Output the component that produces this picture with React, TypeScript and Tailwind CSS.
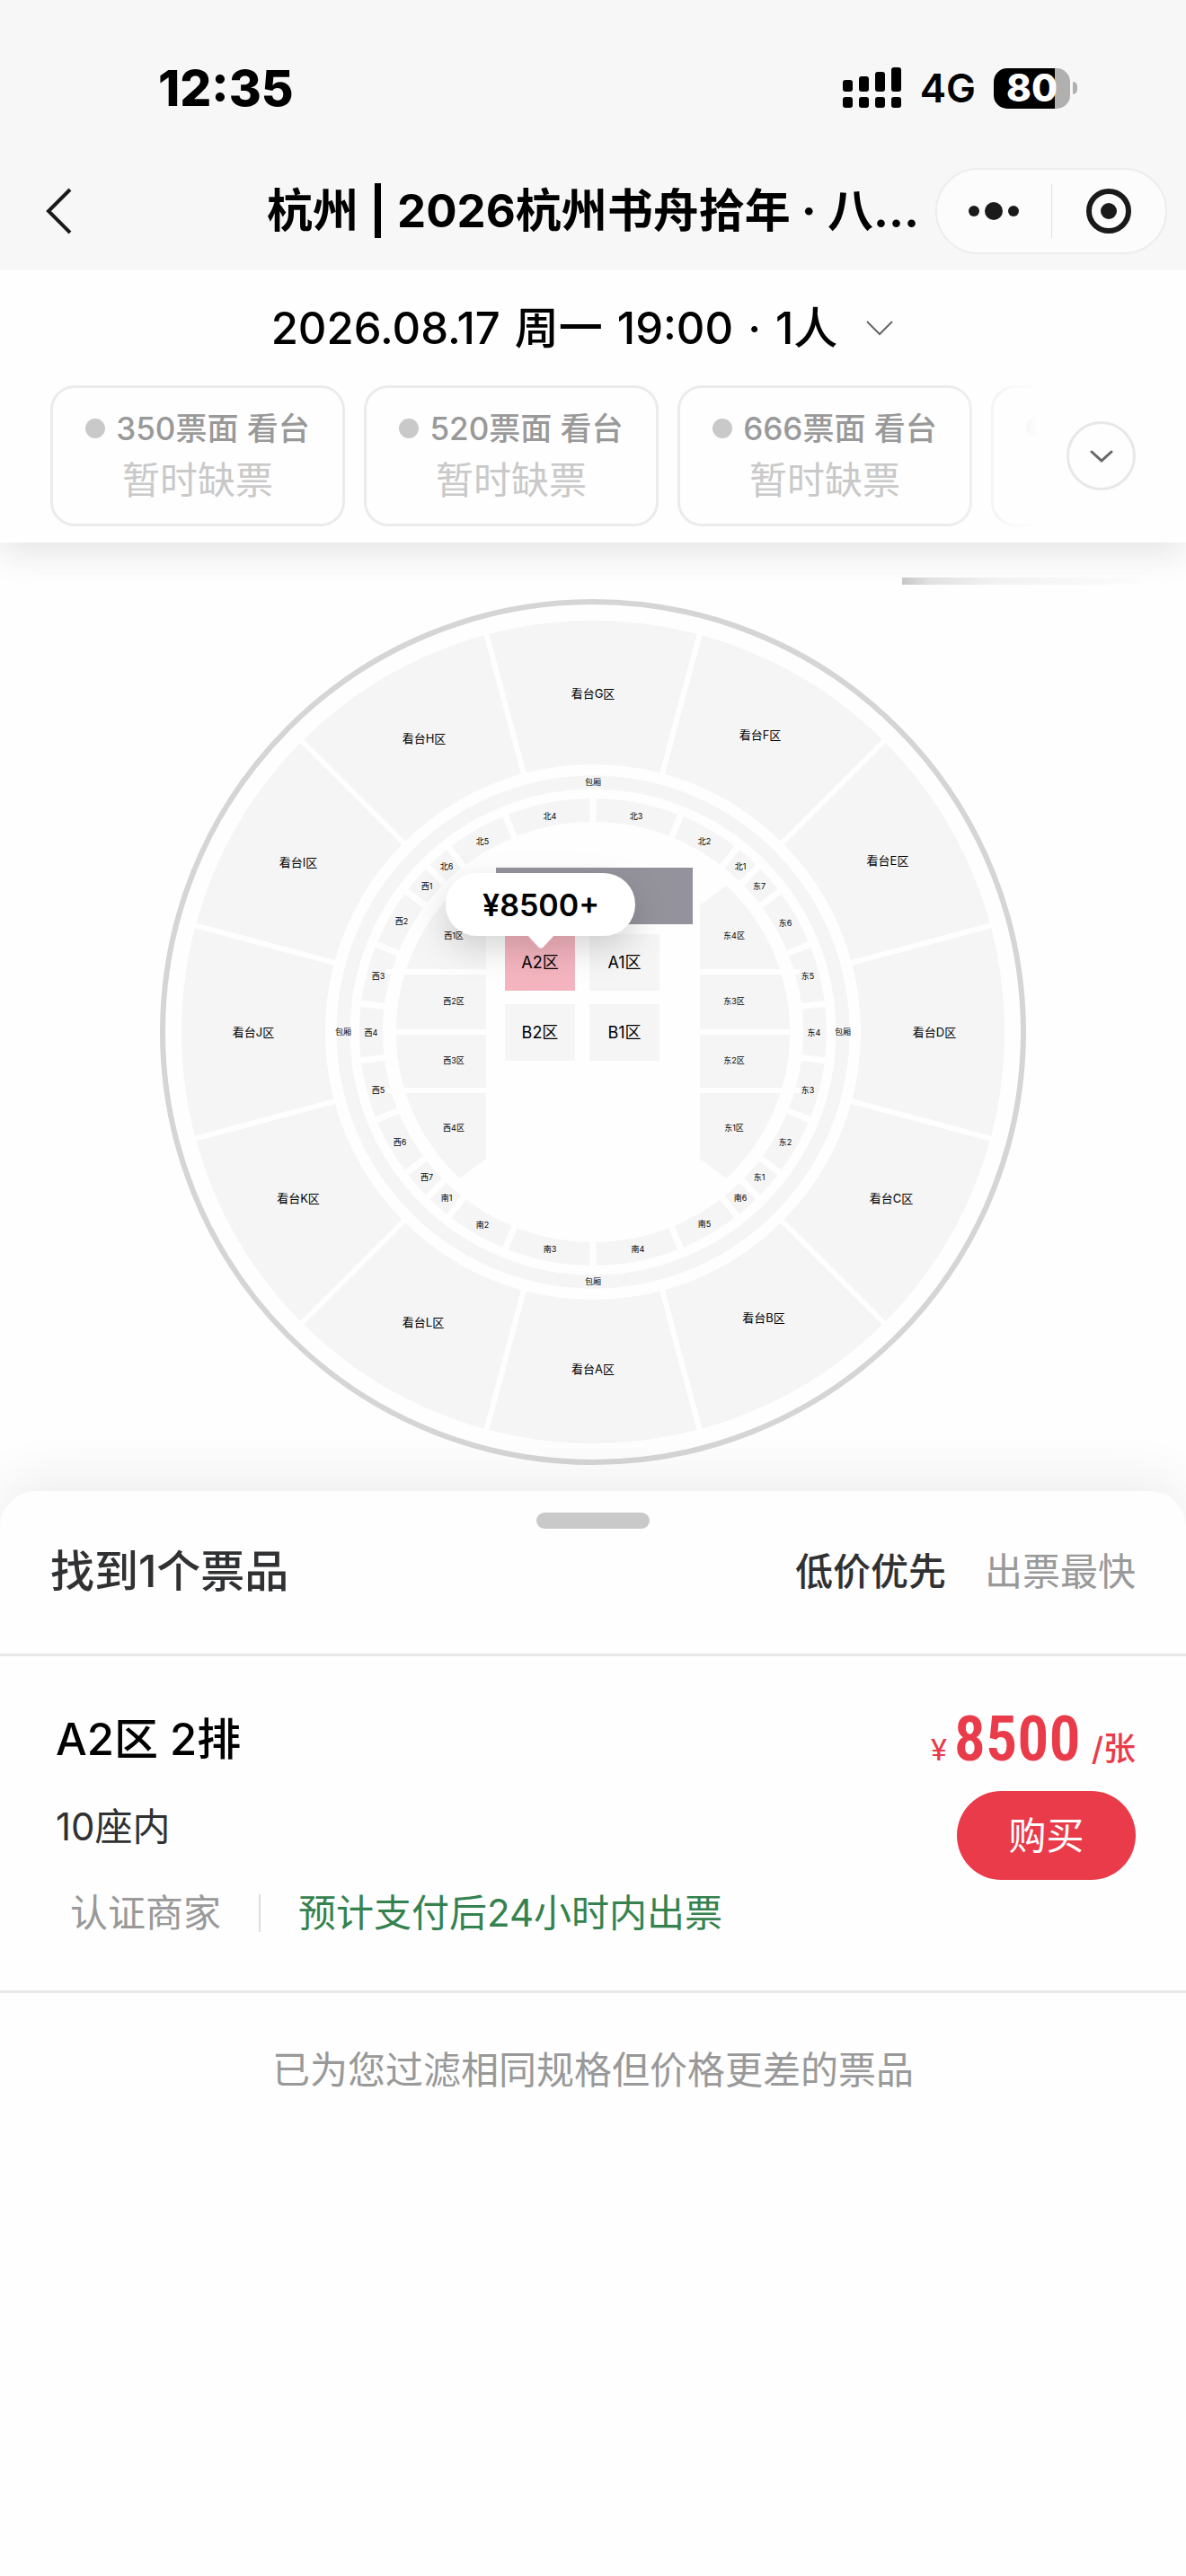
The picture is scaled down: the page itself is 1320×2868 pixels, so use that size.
import { useState } from "react";

type MapLabel = { text: string; x: number; y: number };

const CX = 660;
const CY = 545;

const tiers = [
  { id: "350", name: "350票面 看台" },
  { id: "520", name: "520票面 看台" },
  { id: "666", name: "666票面 看台" },
];

const tickets = [
  {
    id: 1,
    name: "A2区 2排",
    seats: "10座内",
    seller: "认证商家",
    delivery: "预计支付后24小时内出票",
    price: 8500,
  },
];

const sectors: MapLabel[] = [
  { text: "看台G区", x: 660, y: 168 },
  { text: "看台F区", x: 846, y: 214 },
  { text: "看台E区", x: 988, y: 354 },
  { text: "看台D区", x: 1040, y: 545 },
  { text: "看台C区", x: 992, y: 730 },
  { text: "看台B区", x: 850, y: 863 },
  { text: "看台A区", x: 660, y: 920 },
  { text: "看台L区", x: 471, y: 868 },
  { text: "看台K区", x: 332, y: 730 },
  { text: "看台J区", x: 282, y: 545 },
  { text: "看台I区", x: 332, y: 356 },
  { text: "看台H区", x: 472, y: 218 },
];

const blocks: MapLabel[] = [
  { text: "包厢", x: 660, y: 267 },
  { text: "包厢", x: 382, y: 545 },
  { text: "包厢", x: 938, y: 545 },
  { text: "包厢", x: 660, y: 823 },
  { text: "北4", x: 612, y: 305 },
  { text: "北3", x: 708, y: 305 },
  { text: "北5", x: 537, y: 333 },
  { text: "北2", x: 784, y: 333 },
  { text: "北6", x: 497, y: 361 },
  { text: "北1", x: 824, y: 361 },
  { text: "西1", x: 475, y: 383 },
  { text: "东7", x: 845, y: 383 },
  { text: "西2", x: 447, y: 422 },
  { text: "东6", x: 874, y: 424 },
  { text: "西3", x: 421, y: 483 },
  { text: "东5", x: 899, y: 483 },
  { text: "西4", x: 413, y: 546 },
  { text: "东4", x: 906, y: 546 },
  { text: "西5", x: 421, y: 610 },
  { text: "东3", x: 899, y: 610 },
  { text: "西6", x: 445, y: 668 },
  { text: "东2", x: 874, y: 668 },
  { text: "西7", x: 475, y: 707 },
  { text: "东1", x: 845, y: 707 },
  { text: "南1", x: 497, y: 730 },
  { text: "南6", x: 824, y: 730 },
  { text: "南2", x: 537, y: 760 },
  { text: "南5", x: 784, y: 759 },
  { text: "南3", x: 612, y: 787 },
  { text: "南4", x: 710, y: 787 },
  { text: "西1区", x: 505, y: 438 },
  { text: "西2区", x: 505, y: 511 },
  { text: "西3区", x: 505, y: 577 },
  { text: "西4区", x: 505, y: 652 },
  { text: "东4区", x: 817, y: 438 },
  { text: "东3区", x: 817, y: 511 },
  { text: "东2区", x: 817, y: 577 },
  { text: "东1区", x: 817, y: 652 },
];

const floor = [
  { text: "A2区", x: 562, y: 436, onSale: true },
  { text: "A1区", x: 656, y: 436, onSale: false },
  { text: "B2区", x: 562, y: 514, onSale: false },
  { text: "B1区", x: 656, y: 514, onSale: false },
];

const sectorCuts = Array.from({ length: 12 }, (_, i) => 15 + i * 30);
const quarterCuts = [22, 38, 45, 53, 68, 83];
const ringCuts = [0, 180].concat(
  quarterCuts.flatMap((a) => [a, 180 - a, 180 + a, 360 - a])
);

function Cut({ angle, from, to, width }: { angle: number; from: number; to: number; width: number }) {
  return (
    <line
      x1={CX}
      y1={CY - from}
      x2={CX}
      y2={CY - to}
      stroke="#fefefe"
      strokeWidth={width}
      transform={`rotate(${angle} ${CX} ${CY})`}
    />
  );
}

function SeatMap() {
  return (
    <svg viewBox="0 0 1320 1056" className="block w-full" role="img" aria-label="座位图">
      <defs>
        <linearGradient id="streak" x1="0" x2="1" y1="0" y2="0">
          <stop offset="0" stopColor="#c8c8c8" />
          <stop offset="0.12" stopColor="#e2e2e2" />
          <stop offset="0.4" stopColor="#f3f3f3" />
          <stop offset="1" stopColor="#fdfdfd" />
        </linearGradient>
        <filter id="tipShadow" x="-40%" y="-60%" width="180%" height="260%">
          <feDropShadow dx="0" dy="14" stdDeviation="18" floodColor="#000" floodOpacity="0.16" />
        </filter>
      </defs>

      <rect x="1004" y="39" width="264" height="8" fill="url(#streak)" />

      {/* outer wall and stands */}
      <circle cx={CX} cy={CY} r="479" fill="none" stroke="#d5d5d5" strokeWidth="6" />
      <circle cx={CX} cy={CY} r="378" fill="none" stroke="#f5f5f5" strokeWidth="160" />
      {sectorCuts.map((a) => (
        <Cut key={a} angle={a} from={294} to={462} width={6} />
      ))}

      {/* boxes */}
      <circle cx={CX} cy={CY} r="278" fill="none" stroke="#f5f5f5" strokeWidth="15" />

      {/* inner ring */}
      <circle cx={CX} cy={CY} r="247" fill="none" stroke="#f5f5f5" strokeWidth="26" />
      {ringCuts.map((a) => (
        <Cut key={a} angle={a} from={232} to={262} width={7} />
      ))}

      {/* west and east blocks */}
      <path d="M512 382 A222 222 0 0 0 512 708 L541 686 V404 Z" fill="#f5f5f5" />
      <path d="M808 382 A222 222 0 0 1 808 708 L779 686 V404 Z" fill="#f5f5f5" />
      {[475, 542, 607].map((y) => (
        <rect key={y} x="430" y={y} width="460" height="6" fill="#fefefe" />
      ))}

      {/* stage */}
      <rect x="552" y="362" width="219" height="63" fill="#94929b" />

      {floor.map((f) => (
        <rect
          key={f.text}
          x={f.x}
          y={f.y}
          width="78"
          height="63"
          fill={f.onSale ? "#f5b5c0" : "#f5f5f5"}
        />
      ))}

      <g fill="#000" textAnchor="middle">
        {sectors.map((s) => (
          <text key={s.text} x={s.x} y={s.y + 5} fontSize="13">
            {s.text}
          </text>
        ))}
        {blocks.map((b, i) => (
          <text key={i} x={b.x} y={b.y + 3} fontSize="9">
            {b.text}
          </text>
        ))}
        {floor.map((f) => (
          <text key={f.text} x={f.x + 39} y={f.y + 38} fontSize="18">
            {f.text}
          </text>
        ))}
      </g>

      {/* price bubble */}
      <g filter="url(#tipShadow)">
        <path
          d="M531 368 H672 A35 35 0 0 1 672 438 H616 L605 450 Q602 453 599 450 L588 438 H531 A35 35 0 0 1 531 368 Z"
          fill="#fff"
        />
      </g>
      <text x="602" y="416" fontSize="34" fontWeight="600" textAnchor="middle">
        ¥8500+
      </text>
    </svg>
  );
}

function StatusBar() {
  return (
    <div className="flex h-[168px] items-center justify-between pt-7 pr-[121px] pl-44">
      <span className="text-[55px] leading-none font-extrabold">12:35</span>
      <div className="flex items-center">
        <svg width="66" height="46" viewBox="0 0 66 46" aria-hidden="true">
          <rect x="0" y="14" width="11" height="13" rx="3" />
          <rect x="18" y="10" width="11" height="17" rx="3" />
          <rect x="36" y="5" width="11" height="22" rx="3" />
          <rect x="54" y="0" width="11" height="27" rx="3" />
          <rect x="0" y="33" width="11" height="12" rx="3" />
          <rect x="18" y="33" width="11" height="12" rx="3" />
          <rect x="36" y="33" width="11" height="12" rx="3" />
          <rect x="54" y="33" width="11" height="12" rx="3" />
        </svg>
        <span className="ml-5 text-[44px] leading-none font-semibold">4G</span>
        <div className="ml-5 flex items-center gap-[3px]">
          <div className="flex h-[45px] w-[85px] items-center justify-center rounded-[15px] bg-linear-to-r from-black from-80% to-[#b0b0b0] to-80% text-[42px] leading-none font-extrabold text-white">
            80
          </div>
          <div className="h-[14px] w-[5px] rounded-r-full bg-[#b0b0b0]" />
        </div>
      </div>
    </div>
  );
}

function NavBar() {
  return (
    <div className="grid h-[133px] grid-cols-[290px_minmax(0,1fr)_290px] items-center">
      <button type="button" aria-label="返回" className="ml-12 w-9">
        <svg width="36" height="52" viewBox="0 0 36 52" fill="none" stroke="#1a1a1a" strokeWidth="4">
          <path d="M30 2 L6 26 L30 50" />
        </svg>
      </button>
      <h1 className="text-center text-[51px] leading-none font-bold whitespace-nowrap">
        杭州 | 2026杭州书舟拾年 · 八...
      </h1>
      <div className="mr-[21px] ml-auto flex h-24 w-[258px] items-center rounded-full border-2 border-[#ededed] bg-[#fcfcfc]">
        <button type="button" aria-label="更多" className="flex flex-1 justify-center">
          <svg width="56" height="20" viewBox="0 0 56 20" fill="#1a1a1a">
            <circle cx="6" cy="10" r="6" />
            <circle cx="28" cy="10" r="10" />
            <circle cx="50" cy="10" r="6" />
          </svg>
        </button>
        <span className="h-[60px] w-px bg-[#dedede]" />
        <button type="button" aria-label="关闭" className="flex flex-1 justify-center">
          <svg width="52" height="52" viewBox="0 0 52 52">
            <circle cx="26" cy="26" r="22" fill="none" stroke="#1a1a1a" strokeWidth="6" />
            <circle cx="26" cy="26" r="9" fill="#1a1a1a" />
          </svg>
        </button>
      </div>
    </div>
  );
}

export default function App() {
  const [sort, setSort] = useState<"price" | "speed">("price");

  return (
    <div className="flex min-h-screen flex-col bg-[#fefefe] font-['Inter','Noto_Sans_CJK_SC',sans-serif] text-black">
      <header className="relative z-10 bg-[#fefefe] pb-[18px] shadow-[0_12px_36px_rgba(0,0,0,0.10)]">
        <div className="bg-[#f7f7f7]">
          <StatusBar />
          <NavBar />
        </div>

        <button
          type="button"
          className="flex h-32 w-full items-center justify-center gap-8 pr-6 text-[49px] leading-none font-medium"
        >
          <span className="flex gap-4">
            <span>2026.08.17</span>
            <span>周一</span>
            <span>19:00</span>
            <span>·</span>
            <span>1人</span>
          </span>
          <svg width="30" height="18" viewBox="0 0 30 18" fill="none" stroke="#666" strokeWidth="2">
            <path d="M1 2 L15 16 L29 2" />
          </svg>
        </button>

        <div className="flex items-center gap-8 px-14">
          <div className="relative flex min-w-0 flex-1 gap-[21px] overflow-hidden">
            {tiers.map((t) => (
              <button
                key={t.id}
                type="button"
                className="flex h-[157px] w-[328px] shrink-0 flex-col items-center justify-center gap-4 rounded-[27px] border-[3px] border-[#ebebeb] pb-1"
              >
                <span className="flex items-center gap-3 text-[35px] leading-[42px] font-medium whitespace-nowrap text-[#999]">
                  <span className="size-[22px] rounded-full bg-[#c9c9c9]" />
                  {t.name}
                </span>
                <span className="text-[42px] leading-[42px] text-[#c9c9c9]">暂时缺票</span>
              </button>
            ))}
            {/* edge of the next tier, faded out */}
            <div className="h-[157px] w-[328px] shrink-0 rounded-[27px] border-[3px] border-[#ebebeb] pt-8 pl-9">
              <div className="size-[22px] rounded-full bg-[#c9c9c9]" />
            </div>
            <div className="pointer-events-none absolute inset-y-0 right-0 w-24 bg-linear-to-r from-transparent to-[#fefefe]" />
          </div>
          <button
            type="button"
            aria-label="展开票档"
            className="flex size-[77px] shrink-0 items-center justify-center rounded-full border-[3px] border-[#e8e8e8]"
          >
            <svg width="26" height="16" viewBox="0 0 26 16" fill="none" stroke="#666" strokeWidth="3">
              <path d="M2 3 L13 13 L24 3" strokeLinecap="round" />
            </svg>
          </button>
        </div>
      </header>

      <SeatMap />

      <section className="relative flex-1 rounded-t-[40px] bg-[#fefefe] pt-6 shadow-[0_-12px_60px_rgba(0,0,0,0.07)]">
        <div className="mx-auto h-[18px] w-[126px] rounded-full bg-[#c9c9c9]" />

        <div className="flex h-[142px] items-center justify-between border-b-[3px] border-[#e8e8e8] px-14 pb-11 text-[42px] leading-none">
          <h2 className="text-[49px] leading-none font-medium text-[#303133]">找到1个票品</h2>
          <div className="flex gap-[43px]">
            <button
              type="button"
              onClick={() => setSort("price")}
              className={sort === "price" ? "font-medium text-[#303133]" : "text-[#999]"}
            >
              低价优先
            </button>
            <button
              type="button"
              onClick={() => setSort("speed")}
              className={sort === "speed" ? "font-medium text-[#303133]" : "text-[#999]"}
            >
              出票最快
            </button>
          </div>
        </div>

        <ul>
          {tickets.map((t) => (
            <li
              key={t.id}
              className="flex justify-between border-b-[3px] border-[#e8e8e8] pt-15 pr-14 pb-[58px] pl-[62px]"
            >
              <div>
                <h3 className="text-[49px] leading-[66px] font-medium">{t.name}</h3>
                <p className="mt-9 text-[42px] leading-14 text-[#303133]">{t.seats}</p>
                <div className="mt-10 flex items-center pl-4 text-[42px] leading-14">
                  <span className="text-[#999]">{t.seller}</span>
                  <span className="mx-[42px] h-[42px] w-[2px] bg-[#ddd]" />
                  <span className="text-[#35824f]">{t.delivery}</span>
                </div>
              </div>
              <div className="flex flex-col items-end">
                <p className="flex items-baseline font-medium text-[#e93b49]">
                  <span className="mr-2 font-['Roboto'] text-[34px] font-normal">¥</span>
                  <span className="font-['Roboto_Condensed','Roboto',sans-serif] text-[70px] leading-16 font-semibold">
                    {t.price}
                  </span>
                  <span className="ml-3 text-4xl">/张</span>
                </p>
                <button
                  type="button"
                  className="mt-5 h-[99px] w-[199px] rounded-full bg-[#e93b49] text-[42px] leading-none text-white"
                >
                  购买
                </button>
              </div>
            </li>
          ))}
        </ul>

        <p className="pt-[58px] text-center text-[42px] leading-14 text-[#999]">
          已为您过滤相同规格但价格更差的票品
        </p>
      </section>
    </div>
  );
}
